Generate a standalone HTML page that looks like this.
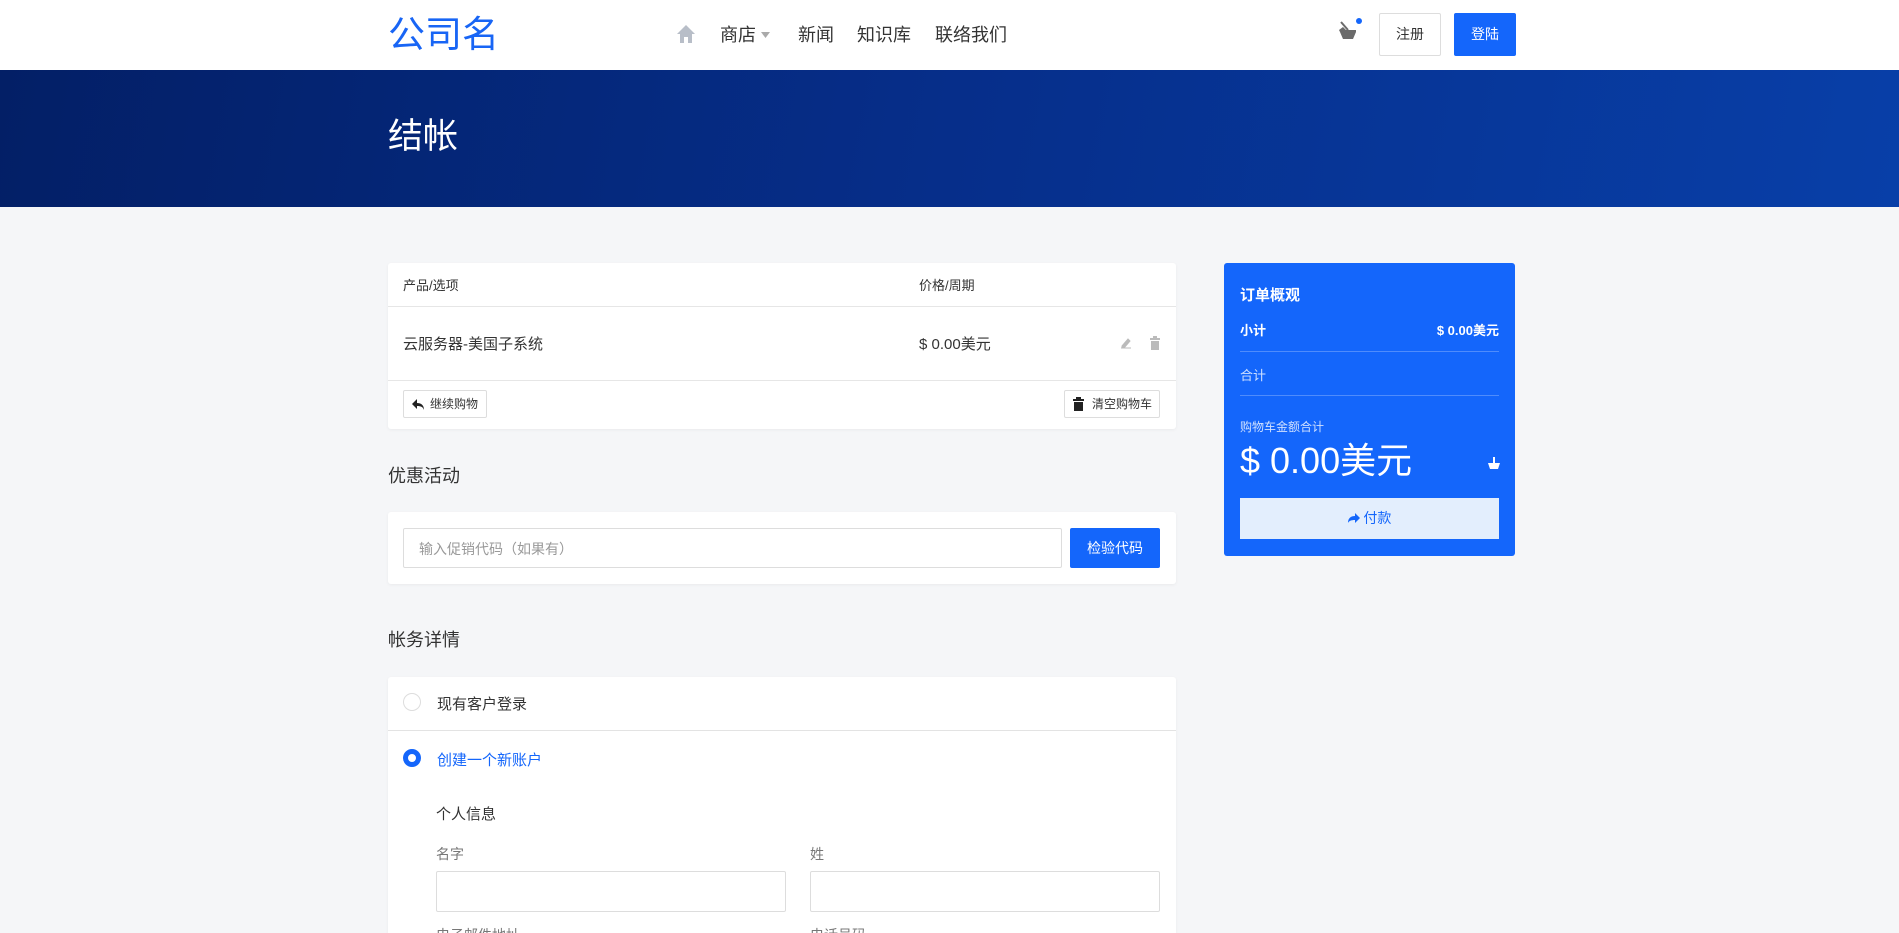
<!DOCTYPE html>
<html><head><meta charset="utf-8">
<style>
*{box-sizing:border-box;margin:0;padding:0}
html{width:1899px;height:933px;overflow:hidden}
body{width:1899px;height:933px;overflow:hidden;background:#f5f6f8;font-family:"Liberation Sans","Noto Sans CJK SC",sans-serif;color:#333;position:relative}
.abs{position:absolute}
.hdr{left:0;top:0;width:1899px;height:70px;background:#fff}
.logo{left:388px;top:13px;font-size:37px;color:#1865f5;line-height:44px}
.nav{top:23px;font-size:18px;color:#333;line-height:24px}
.btn1{left:1379px;top:13px;width:62px;height:43px;border:1px solid #ddd;background:#fff;font-size:14px;text-align:center;line-height:41px;border-radius:2px}
.btn2{left:1454px;top:13px;width:62px;height:43px;background:#1466fb;color:#fff;font-size:14px;text-align:center;line-height:43px;border-radius:2px}
.banner{left:0;top:70px;width:1899px;height:137px;background:linear-gradient(100deg,#031f66 0%,#062e8a 50%,#083fa8 100%)}
.title{left:388px;top:115px;font-size:35px;color:#fff;line-height:44px}
.card{background:#fff;border-radius:3px;box-shadow:0 1px 3px rgba(0,0,0,.05)}
.t13{font-size:13px}
.t15{font-size:15px}
.sb{left:1224px;top:263px;width:291px;height:293px;background:#1466fb;border-radius:3px;color:#fff}
.line{height:1px;background:rgba(255,255,255,.25);left:16px;right:16px}
.inp{border:1px solid #ddd;background:#fff;border-radius:2px}
.sm{border:1px solid #ddd;border-radius:2px;background:#fff;font-size:12px;line-height:26px;color:#333}
</style></head><body>
<div class="abs hdr"></div>
<div class="abs logo">公司名</div>
<svg class="abs" style="left:676px;top:24px" width="20" height="20" viewBox="0 0 20 20"><path d="M10 1L1 10h3v9h4v-6h4v6h4v-9h3z" fill="#b8bec8"/></svg>
<div class="abs nav" style="left:720px">商店</div>
<svg class="abs" style="left:761px;top:32px" width="9" height="6"><path d="M0 0h9L4.5 6z" fill="#aaa"/></svg>
<div class="abs nav" style="left:798px">新闻</div>
<div class="abs nav" style="left:857px">知识库</div>
<div class="abs nav" style="left:935px">联络我们</div>
<svg class="abs" style="left:1334px;top:16px" width="30" height="30" viewBox="0 0 30 30"><path d="M5 14l4-3 3 3h10v2l-3 7H9l-3-7z" fill="#6b6b6b"/><path d="M7 6l7 8" stroke="#6b6b6b" stroke-width="2"/><circle cx="25" cy="5" r="3" fill="#1466fb"/></svg>
<div class="abs btn1">注册</div>
<div class="abs btn2">登陆</div>
<div class="abs banner"></div>
<div class="abs title">结帐</div>

<div class="abs card" style="left:388px;top:263px;width:788px;height:166px"></div>
<div class="abs t13" style="left:403px;top:275px">产品/选项</div>
<div class="abs t13" style="left:919px;top:275px">价格/周期</div>
<div class="abs" style="left:388px;top:306px;width:788px;height:1px;background:#e6e6e6"></div>
<div class="abs t15" style="left:403px;top:333px">云服务器-美国子系统</div>
<div class="abs t15" style="left:919px;top:333px">$ 0.00美元</div>
<svg class="abs" style="left:1119px;top:336px" width="14" height="14"><path d="M2 12h10M3 10l6-7 2 2-6 7H3z" fill="#bbb" stroke="#bbb"/></svg>
<svg class="abs" style="left:1149px;top:336px" width="12" height="14"><path d="M1 2h10v2H1zM4 0h4v2H4zM2 5h8v9H2z" fill="#bbb"/></svg>
<div class="abs" style="left:388px;top:380px;width:788px;height:1px;background:#e6e6e6"></div>
<div class="abs sm" style="left:403px;top:390px;width:84px;height:28px;padding-left:26px">继续购物</div>
<svg class="abs" style="left:411px;top:397px" width="14" height="14"><path d="M6 2L1 7l5 5V9c4 0 6 1 7 4 0-5-3-7-7-7z" fill="#222"/></svg>
<div class="abs sm" style="left:1064px;top:390px;width:96px;height:28px;padding-left:27px">清空购物车</div>
<svg class="abs" style="left:1073px;top:397px" width="11" height="14"><path d="M0 2h11v2H0zM3 0h5v2H3zM1 5h9v9H1z" fill="#222"/></svg>

<div class="abs" style="left:388px;top:462px;font-size:18px">优惠活动</div>
<div class="abs card" style="left:388px;top:512px;width:788px;height:72px"></div>
<div class="abs inp" style="left:403px;top:528px;width:659px;height:40px"></div>
<div class="abs" style="left:419px;top:539px;font-size:14px;color:#999">输入促销代码（如果有）</div>
<div class="abs" style="left:1070px;top:528px;width:90px;height:40px;background:#1466fb;color:#fff;font-size:14px;text-align:center;line-height:40px;border-radius:2px">检验代码</div>

<div class="abs" style="left:388px;top:626px;font-size:18px">帐务详情</div>
<div class="abs card" style="left:388px;top:677px;width:788px;height:256px;border-radius:3px 3px 0 0"></div>
<div class="abs" style="left:388px;top:730px;width:788px;height:1px;background:#e3e3e3"></div>
<div class="abs" style="left:403px;top:693px;width:18px;height:18px;border:1px solid #ddd;border-radius:50%"></div>
<div class="abs t15" style="left:437px;top:693px">现有客户登录</div>
<div class="abs" style="left:403px;top:749px;width:18px;height:18px;border:5px solid #1466fb;border-radius:50%;background:#fff"></div>
<div class="abs t15" style="left:437px;top:749px;color:#1466fb">创建一个新账户</div>
<div class="abs t15" style="left:436px;top:803px">个人信息</div>
<div class="abs" style="left:436px;top:844px;font-size:14px;color:#777">名字</div>
<div class="abs" style="left:810px;top:844px;font-size:14px;color:#777">姓</div>
<div class="abs inp" style="left:436px;top:871px;width:350px;height:41px"></div>
<div class="abs inp" style="left:810px;top:871px;width:350px;height:41px"></div>
<div class="abs" style="left:436px;top:927px;font-size:14px;line-height:16px;color:#777">电子邮件地址</div>
<div class="abs" style="left:810px;top:927px;font-size:14px;line-height:16px;color:#777">电话号码</div>

<div class="abs sb">
 <div class="abs" style="left:16px;top:21px;font-size:15px;font-weight:bold">订单概观</div>
 <div class="abs t13" style="left:16px;top:57px;font-weight:bold">小计</div>
 <div class="abs t13" style="right:16px;top:57px;font-weight:bold">$ 0.00美元</div>
 <div class="abs line" style="top:88px"></div>
 <div class="abs t13" style="left:16px;top:102px;color:#cfe0ff">合计</div>
 <div class="abs line" style="top:132px"></div>
 <div class="abs" style="left:16px;top:155px;font-size:12px;color:#cfe0ff">购物车金额合计</div>
 <div class="abs" style="left:16px;top:176px;font-size:36px;line-height:44px">$ 0.00美元</div>
 <svg class="abs" style="left:262px;top:192px" width="16" height="16"><path d="M2 8h12l-2 6H4z" fill="#fff"/><path d="M8 2v6" stroke="#fff" stroke-width="2"/></svg>
 <div class="abs" style="left:16px;top:235px;width:259px;height:41px;background:#e3eefd;color:#1466fb;font-size:14px;text-align:center;line-height:41px">
  <svg width="12" height="12" viewBox="0 0 12 12" style="vertical-align:-1px"><path d="M7 1l5 5-5 5V8C3 8 1 9 0 11c0-5 3-7 7-7z" fill="#1466fb"/></svg> 付款</div>
</div>
</body></html>
